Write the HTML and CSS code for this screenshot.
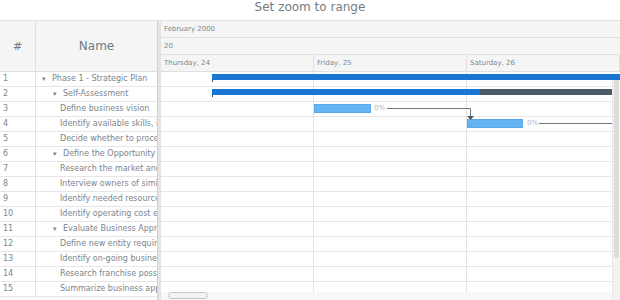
FILE: index.html
```html
<!DOCTYPE html>
<html lang="en">
<head>
    <meta charset="UTF-8">
    <title>Set zoom to range</title>
    <link rel="stylesheet" href="styles.css">
</head>
<body>
    <div class="title">Set zoom to range</div>

    <div class="chart">
        <div class="grid">
            <div class="grid-head">
                <div class="col-num">#</div>
                <div class="col-name">Name</div>
            </div>
            <div class="grid-body">
                <div class="row"><span class="num">1</span><span class="name lvl0"><i class="caret">&#9662;</i>Phase 1 - Strategic Plan</span></div>
                <div class="row"><span class="num">2</span><span class="name lvl1"><i class="caret">&#9662;</i>Self-Assessment</span></div>
                <div class="row"><span class="num">3</span><span class="name lvl2">Define business vision</span></div>
                <div class="row"><span class="num">4</span><span class="name lvl2">Identify available skills, information and support</span></div>
                <div class="row"><span class="num">5</span><span class="name lvl2">Decide whether to proceed</span></div>
                <div class="row"><span class="num">6</span><span class="name lvl1"><i class="caret">&#9662;</i>Define the Opportunity</span></div>
                <div class="row"><span class="num">7</span><span class="name lvl2">Research the market and competition</span></div>
                <div class="row"><span class="num">8</span><span class="name lvl2">Interview owners of similar businesses</span></div>
                <div class="row"><span class="num">9</span><span class="name lvl2">Identify needed resources</span></div>
                <div class="row"><span class="num">10</span><span class="name lvl2">Identify operating cost elements</span></div>
                <div class="row"><span class="num">11</span><span class="name lvl1"><i class="caret">&#9662;</i>Evaluate Business Approach</span></div>
                <div class="row"><span class="num">12</span><span class="name lvl2">Define new entity requirements</span></div>
                <div class="row"><span class="num">13</span><span class="name lvl2">Identify on-going business purchase opportunities</span></div>
                <div class="row"><span class="num">14</span><span class="name lvl2">Research franchise possibilities</span></div>
                <div class="row"><span class="num">15</span><span class="name lvl2">Summarize business approach</span></div>
            </div>
        </div>

        <div class="splitter"></div>

        <div class="timeline">
            <div class="scale">
                <div class="scale-row">February 2000</div>
                <div class="scale-row">20</div>
                <div class="scale-row days">
                    <div class="day">Thursday, 24</div>
                    <div class="day">Friday, 25</div>
                    <div class="day">Saturday, 26</div>
                </div>
            </div>
            <div class="tl-body">
                <div class="tl-row"><div class="summary" style="left: 51px; width: 420px;"></div></div>
                <div class="tl-row"><div class="summary split" style="left: 51px; width: 420px;"><div class="done" style="width: 268px;"></div></div></div>
                <div class="tl-row"><div class="task" style="left: 153px; width: 57px;"></div><span class="pct" style="left: 213px;">0%</span></div>
                <div class="tl-row"><div class="task" style="left: 306px; width: 56px;"></div><span class="pct" style="left: 366px;">0%</span></div>
                <div class="tl-row"></div>
                <div class="tl-row"></div>
                <div class="tl-row"></div>
                <div class="tl-row"></div>
                <div class="tl-row"></div>
                <div class="tl-row"></div>
                <div class="tl-row"></div>
                <div class="tl-row"></div>
                <div class="tl-row"></div>
                <div class="tl-row"></div>
                <div class="tl-row"></div>

                <svg class="links" width="459" height="228" viewBox="0 0 459 228">
                    <path d="M226 36.5 H309.5 V44" fill="none" stroke="#6b7680" stroke-width="1"/>
                    <path d="M306 44 L313 44 L309.5 48 Z" fill="#4b5660"/>
                    <path d="M378 51.5 H459" fill="none" stroke="#6b7680" stroke-width="1"/>
                </svg>

                <div class="vscroll"><div class="vthumb"></div></div>
                <div class="hscroll"><div class="hthumb"></div></div>
            </div>
        </div>
    </div>
</body>
</html>
```

FILE: styles.css
```css
* {
    margin: 0;
    padding: 0;
    box-sizing: border-box;
}

body {
    font-family: 'DejaVu Sans', 'Noto Sans', sans-serif;
    color: #7b858e;
    background: #fff;
    width: 620px;
    height: 300px;
    overflow: hidden;
}

.title {
    height: 20px;
    text-align: center;
    font-size: 12px;
    line-height: 15px;
    color: #737d86;
}

.chart {
    display: flex;
    height: 280px;
    border-top: 1px solid #e2e2e2;
}

/* data grid */

.grid {
    width: 157px;
    flex-shrink: 0;
    font-size: 8px;
}

.grid-head {
    display: flex;
    height: 51px;
    background: #f5f5f5;
    border-bottom: 1px solid #dedede;
    font-size: 12px;
    color: #6f7a83;
}

.col-num {
    width: 36px;
    border-right: 1px solid #dedede;
    display: flex;
    align-items: center;
    justify-content: center;
    font-size: 11px;
}

.col-name {
    flex: 1;
    display: flex;
    align-items: center;
    justify-content: center;
}

.row {
    display: flex;
    height: 15px;
    line-height: 14px;
    border-bottom: 1px solid #e6e6e6;
    white-space: nowrap;
}

.num {
    width: 36px;
    flex-shrink: 0;
    padding-left: 3px;
    border-right: 1px solid #e3e3e3;
}

.name {
    flex: 1;
    overflow: hidden;
}

.caret {
    font-style: normal;
    font-size: 7px;
    display: inline-block;
    width: 10px;
}

.lvl0 { padding-left: 6px; }
.lvl1 { padding-left: 17px; }
.lvl2 { padding-left: 24px; }

.splitter {
    width: 4px;
    flex-shrink: 0;
    background: #e4e4e4;
    border-left: 1px solid #d2d2d2;
}

/* timeline */

.timeline {
    flex: 1;
    display: flex;
    flex-direction: column;
    overflow: hidden;
}

.scale {
    background: #f5f5f5;
    font-size: 7px;
    color: #7d878f;
}

.scale-row {
    height: 17px;
    line-height: 16px;
    padding-left: 3px;
    border-bottom: 1px solid #e0e0e0;
}

.scale-row.days {
    display: flex;
    padding-left: 0;
}

.day {
    width: 153px;
    padding-left: 3px;
    border-right: 1px solid #e0e0e0;
}

.tl-body {
    position: relative;
    flex: 1;
    background:
        linear-gradient(#e3e3e3, #e3e3e3) 152px 0 / 1px 100% no-repeat,
        linear-gradient(#e3e3e3, #e3e3e3) 305px 0 / 1px 100% no-repeat;
}

.tl-row {
    position: relative;
    height: 15px;
    border-bottom: 1px solid #e6e6e6;
}

.summary {
    position: absolute;
    top: 2px;
    height: 6px;
    background: #1976d2;
}

.summary::before {
    content: '';
    position: absolute;
    left: 0;
    top: 6px;
    width: 1px;
    height: 2px;
    background: #455a64;
}

.summary.split {
    background: #4b5b66;
}

.done {
    height: 100%;
    background: #1976d2;
}

.task {
    position: absolute;
    top: 2px;
    height: 9px;
    background: #64b5f6;
    border: 1px solid #5aa9ea;
}

.pct {
    position: absolute;
    top: 0;
    font-size: 7px;
    line-height: 13px;
    color: #b0b7bd;
    background: #fff;
    z-index: 2;
}

.links {
    position: absolute;
    left: 0;
    top: 0;
    z-index: 1;
}

.vscroll {
    position: absolute;
    right: 0;
    top: 8px;
    width: 8px;
    height: 220px;
    background: #f2f2f2;
    border-left: 1px solid #e6e6e6;
    z-index: 3;
}

.vthumb {
    margin: 0 1px;
    height: 178px;
    background: #dcdcdc;
    border-radius: 0 0 4px 4px;
}

.hscroll {
    position: absolute;
    left: 0;
    right: 8px;
    bottom: 0;
    height: 8px;
    background: #f7f7f7;
    z-index: 3;
}

.hthumb {
    margin-left: 7px;
    width: 40px;
    height: 7px;
    border: 1px solid #c6c6c6;
    border-radius: 4px;
    background: #f3f3f3;
}
```
